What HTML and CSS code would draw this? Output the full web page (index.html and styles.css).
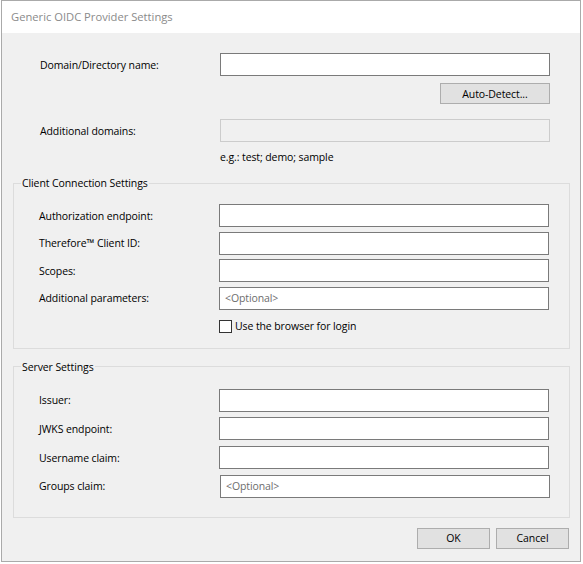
FILE: index.html
```html
<!DOCTYPE html>
<html lang="en">
<head>
<meta charset="utf-8">
<title>Generic OIDC Provider Settings</title>
<link rel="stylesheet" href="styles.css">
</head>
<body>
<div class="window">
  <div class="titlebar">Generic OIDC Provider Settings</div>
  <div class="body">
    <div class="top">
      <div class="row">
        <label class="lbl">Domain/Directory name:</label>
        <input class="field" type="text">
      </div>
      <div class="row row-btn">
        <button class="btn btn-detect" type="button">Auto-Detect...</button>
      </div>
      <div class="row row-add">
        <label class="lbl">Additional domains:</label>
        <input class="field" type="text" disabled>
      </div>
      <div class="hint">e.g.: test; demo; sample</div>
    </div>
    <div class="groups">
      <fieldset class="group">
        <legend>Client Connection Settings</legend>
        <div class="gbody gbody-client">
          <div class="rows rows-client">
            <div class="row"><label class="lbl">Authorization endpoint:</label><input class="field" type="text"></div>
            <div class="row"><label class="lbl">Therefore™ Client ID:</label><input class="field" type="text"></div>
            <div class="row"><label class="lbl">Scopes:</label><input class="field" type="text"></div>
            <div class="row"><label class="lbl">Additional parameters:</label><input class="field" type="text" placeholder="&lt;Optional&gt;"></div>
          </div>
          <label class="check-row"><input class="check" type="checkbox"><span>Use the browser for login</span></label>
        </div>
      </fieldset>
      <fieldset class="group group-server">
        <legend>Server Settings</legend>
        <div class="gbody gbody-server">
          <div class="rows rows-server">
            <div class="row"><label class="lbl">Issuer:</label><input class="field" type="text"></div>
            <div class="row"><label class="lbl">JWKS endpoint:</label><input class="field" type="text"></div>
            <div class="row"><label class="lbl">Username claim:</label><input class="field" type="text"></div>
            <div class="row"><label class="lbl">Groups claim:</label><input class="field field-shift" type="text" placeholder="&lt;Optional&gt;"></div>
          </div>
        </div>
      </fieldset>
      <div class="actions">
        <button class="btn btn-dlg" type="button">OK</button>
        <button class="btn btn-dlg" type="button">Cancel</button>
      </div>
    </div>
  </div>
</div>
</body>
</html>
```
FILE: styles.css
```css
* { box-sizing: border-box; }

html, body {
  margin: 0;
  padding: 0;
  background: #ffffff;
}

body {
  font-family: "Open Sans", "Noto Sans", "DejaVu Sans", sans-serif;
  font-size: 10.5px;
  letter-spacing: -0.1px;
  color: #000000;
}

.window {
  margin-left: 1px;
  width: 580px;
  height: 562px;
  border: 1px solid #aaaaaa;
  display: flex;
  flex-direction: column;
}

.titlebar {
  height: 32px;
  line-height: 32px;
  padding-left: 9px;
  background: #ffffff;
  color: #8a8a8a;
  font-size: 11.2px;
  letter-spacing: 0;
  flex: none;
}

.body {
  flex: 1;
  background: #f0f0f0;
  padding-top: 20px;
}

.top {
  padding-left: 38px;
}

.row {
  display: flex;
  align-items: center;
  height: 23px;
}

.lbl {
  width: 180px;
  flex: none;
}

.field {
  width: 330px;
  height: 23px;
  margin: 0;
  padding: 0 5px;
  border: 1px solid #7a7a7a;
  background: #ffffff;
  font: inherit;
  letter-spacing: inherit;
  color: #000;
  outline: none;
  border-radius: 0;
}

.field::placeholder {
  color: #6d6d6d;
  opacity: 1;
}

.field:disabled {
  background: #f0f0f0;
  border-color: #cccccc;
}

.field-shift {
  margin-left: 1px;
}

.row-btn {
  margin-top: 7px;
  height: 21px;
  padding-left: 400px;
}

.row-add {
  margin-top: 15px;
}

.hint {
  margin-top: 7px;
  margin-left: 180px;
  line-height: 16px;
}

.btn {
  margin: 0;
  padding: 0;
  height: 21px;
  border: 1px solid #adadad;
  background: #e1e1e1;
  font: inherit;
  letter-spacing: inherit;
  color: #000;
  border-radius: 0;
}

.btn-detect {
  width: 110px;
}

.groups {
  padding: 0 10px 0 11px;
  margin-top: 11px;
}

.group {
  margin: 0;
  padding: 0;
  border: 1px solid #dcdcdc;
  min-width: 0;
}

.group legend {
  margin-left: 7px;
  padding: 0 1px;
  line-height: 14px;
}

.group-server {
  margin-top: 11px;
}

.gbody {
  padding-left: 25px;
}

.gbody-client {
  padding-top: 14px;
  padding-bottom: 14px;
}

.gbody-server {
  padding-top: 15px;
  padding-bottom: 19px;
}

.rows {
  display: flex;
  flex-direction: column;
}

.rows-client { gap: 4.6px; }
.rows-server { gap: 5.67px; }

.check-row {
  display: flex;
  align-items: center;
  height: 15px;
  margin-top: 9px;
  margin-left: 180px;
}

.check {
  appearance: none;
  -webkit-appearance: none;
  width: 13px;
  height: 13px;
  margin: 0 3px 0 0;
  border: 1px solid #333333;
  background: #ffffff;
  border-radius: 0;
}

.actions {
  display: flex;
  justify-content: flex-end;
  gap: 6px;
  margin-top: 10px;
  padding-right: 1px;
}

.btn-dlg {
  width: 73px;
}
```
